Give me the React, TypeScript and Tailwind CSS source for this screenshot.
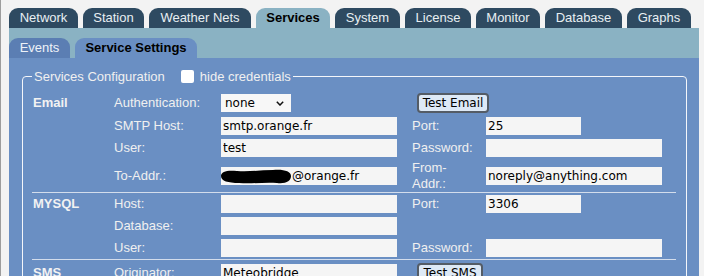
import React from "react";

const tabs: { name: string; w: string; active?: boolean }[] = [
  { name: "Network", w: "w-[69px]" },
  { name: "Station", w: "w-[61px]" },
  { name: "Weather Nets", w: "w-[102px]" },
  { name: "Services", w: "w-[74px]", active: true },
  { name: "System", w: "w-[65px]" },
  { name: "License", w: "w-[66px]" },
  { name: "Monitor", w: "w-[64px]" },
  { name: "Database", w: "w-[77px]" },
  { name: "Graphs", w: "w-[64px]" },
];

const inputCls =
  "block h-[18px] bg-[#f5f5f5] px-[2px] text-[12px] leading-[18px] font-['DejaVu_Sans',sans-serif] text-black outline-none border-0";

function Field({ value = "", w = "w-[176px]" }: { value?: string; w?: string }) {
  return <input readOnly value={value} className={`${inputCls} ${w}`} />;
}

function Btn({ children, w }: { children: React.ReactNode; w: string }) {
  return (
    <button
      className={`ml-[5px] h-[20px] ${w} rounded-[4px] border-2 border-[#545c66] bg-[#dde9f6] text-[12px] leading-[16px] font-['DejaVu_Sans',sans-serif] text-black`}
    >
      {children}
    </button>
  );
}

function Row({
  h,
  section,
  label,
  field,
  label3,
  field3,
}: {
  h: string;
  section?: string;
  label?: React.ReactNode;
  field?: React.ReactNode;
  label3?: React.ReactNode;
  field3?: React.ReactNode;
}) {
  return (
    <div className={`flex items-center ${h}`}>
      <div className="w-[82px] pl-[1px] font-bold text-[#f2f2f2]">{section}</div>
      <div className="w-[107px] text-[#f0f0f0]">{label}</div>
      <div className="w-[191px]">{field}</div>
      <div className="w-[74px] text-[#f0f0f0]">{label3}</div>
      <div className="flex-1">{field3}</div>
    </div>
  );
}

function Sep() {
  return <div className="h-[1px] bg-[#d3ddec]" />;
}

export default function App() {
  return (
    <div className="h-[276px] overflow-hidden bg-[#f3f3f3] border-l border-[#9d9d9d] pl-[8px] pt-[8px] font-['Liberation_Sans',Arial,sans-serif] text-[13px]">
      <div className="w-[690px]">
        {/* main tabs */}
        <div className="flex gap-[5px] h-[20px]">
          {tabs.map((t) => (
            <div
              key={t.name}
              className={`${t.w} h-[20px] rounded-t-[9px] flex items-center justify-center leading-[20px] ${
                t.active ? "bg-[#8ab2c3] text-black font-bold" : "bg-[#2e4a61] text-[#e8eff3]"
              }`}
            >
              {t.name}
            </div>
          ))}
        </div>
        {/* sub tabs bar */}
        <div className="bg-[#8ab2c3] h-[30px] pt-[10px] flex gap-[5px]">
          <div className="w-[61px] h-[20px] rounded-t-[9px] bg-[#5b7eb3] text-[#eef2f8] flex items-center justify-center">
            Events
          </div>
          <div className="w-[122px] h-[20px] rounded-t-[9px] bg-[#6a8fc3] text-black font-bold flex items-center justify-center">
            Service Settings
          </div>
        </div>
        {/* content */}
        <div className="bg-[#6a8fc3] pt-[11px] pb-[20px]">
          <fieldset className="ml-[13px] mr-[12px] border border-[#f4f6fa] rounded-[4px] pl-[9px] pr-[10px] pt-[7px] pb-[8px]">
            <legend className="px-[2px] leading-[15px] text-[#f0f0f0]">
              <span className="flex items-center">
                <span>Services Configuration</span>
                <span className="ml-[16px] inline-block w-[13px] h-[13px] rounded-[2px] bg-white" />
                <span className="ml-[6px]">hide credentials</span>
              </span>
            </legend>
            <div>
              <Row
                h="h-[24px]"
                section="Email"
                label="Authentication:"
                field={
                  <div className="flex h-[18px] w-[70px] items-center justify-between bg-[#f7f7f7] pl-[4px] pr-[7px] text-[12px] font-['DejaVu_Sans',sans-serif] text-black">
                    <span>none</span>
                    <svg width="8" height="5" viewBox="0 0 8 5">
                      <path d="M0.8 0.8 L4 4 L7.2 0.8" fill="none" stroke="#111" strokeWidth="1.5" />
                    </svg>
                  </div>
                }
                label3={<Btn w="w-[72px]">Test Email</Btn>}
              />
              <Row
                h="h-[22px]"
                label="SMTP Host:"
                field={<Field value="smtp.orange.fr" />}
                label3="Port:"
                field3={<Field value="25" w="w-[95px]" />}
              />
              <Row
                h="h-[22px]"
                label="User:"
                field={<Field value="test" />}
                label3="Password:"
                field3={<Field />}
              />
              <Row
                h="h-[33px]"
                label="To-Addr.:"
                field={
                  <div className="relative flex h-[18px] w-[176px] items-center bg-[#f5f5f5] text-[12px] font-['DejaVu_Sans',sans-serif] text-black">
                    <svg className="absolute left-[-2px] top-[1px]" width="74" height="17" viewBox="0 0 74 17">
                      <path
                        d="M2 8 C2 3 9 2 18 3 C30 4 42 2 54 2 C64 1 72 3 72 8 C72 13 67 16 58 15 C46 14 33 16 20 15 C9 15 2 13 2 8 Z"
                        fill="#000"
                      />
                    </svg>
                    <span className="pl-[71px]">@orange.fr</span>
                  </div>
                }
                label3={
                  <div className="leading-[16px]">
                    From-
                    <br />
                    Addr.:
                  </div>
                }
                field3={<Field value="noreply@anything.com" />}
              />
              <Sep />
              <Row
                h="h-[22px]"
                section="MYSQL"
                label="Host:"
                field={<Field />}
                label3="Port:"
                field3={<Field value="3306" w="w-[95px]" />}
              />
              <Row h="h-[22px]" label="Database:" field={<Field />} />
              <Row
                h="h-[22px]"
                label="User:"
                field={<Field />}
                label3="Password:"
                field3={<Field />}
              />
              <Sep />
              <Row
                h="h-[26px]"
                section="SMS"
                label="Originator:"
                field={<Field value="Meteobridge" />}
                label3={<Btn w="w-[66px]">Test SMS</Btn>}
              />
              <Row h="h-[22px]" label="Key:" field={<Field />} />
            </div>
          </fieldset>
        </div>
      </div>
    </div>
  );
}
